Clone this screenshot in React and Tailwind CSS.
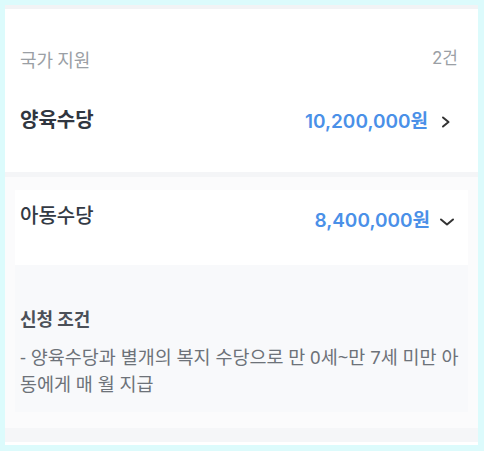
export default function App() {
  const num = { fontFamily: 'Inter, "Noto Sans CJK KR", sans-serif' };
  const kr = { fontFamily: '"Noto Sans CJK KR", "Noto Sans", sans-serif' };
  const desc = { fontFamily: '"Noto Sans", "Noto Sans CJK KR", sans-serif' };
  return (
    <div className="w-[484px] h-[451px] bg-[#dcfbfc] p-[5px] pb-[6px]" style={kr}>
      <div className="w-[473px] h-[440px] bg-white flex flex-col overflow-hidden">
        <div className="h-[4px] bg-[#f2f3f5]" />
        {/* section 1 */}
        <div className="h-[163px] flex flex-col px-[15px]">
          <div className="flex justify-between items-center h-[30px] mt-[35px] text-[18px] text-[#9b9fa5]">
            <span>국가 지원</span>
            <span className="mr-[5px] text-[17px]" style={num}>2건</span>
          </div>
          <div className="flex justify-between items-start mt-[31px]">
            <span className="text-[20px] font-semibold text-[#303640] leading-[28px]">양육수당</span>
            <div className="flex items-center mt-[3px] mr-[12px]">
              <span className="text-[19px] font-semibold text-[#4a90e8] leading-[28px]" style={num}>10,200,000원</span>
              <svg width="10" height="12" viewBox="0 0 10 12" className="ml-[13px]" fill="none" stroke="#333" strokeWidth="2" strokeLinecap="round" strokeLinejoin="round">
                <path d="M2 1.5l5.5 4.5-5.5 4.5" />
              </svg>
            </div>
          </div>
        </div>
        <div className="h-[5px] bg-[#f4f5f7]" />
        {/* section 2 */}
        <div className="flex-1 bg-[#fbfbfc] flex flex-col">
          <div className="px-[10px] pt-[13px]">
            <div className="bg-white h-[75px] flex justify-between items-start px-[5px]">
              <span className="text-[20px] font-medium text-[#333a44] leading-[28px] mt-[11px]">아동수당</span>
              <div className="flex items-center mt-[17px] mr-[8px]">
                <span className="text-[19px] font-semibold text-[#4a90e8] leading-[28px]" style={num}>8,400,000원</span>
                <svg width="16" height="8" viewBox="0 0 16 8" className="ml-[9px] mt-[2px]" fill="none" stroke="#333" strokeWidth="2" strokeLinecap="round" strokeLinejoin="round">
                  <path d="M2 1.5l6 5 6-5" />
                </svg>
              </div>
            </div>
            <div className="bg-[#f8f9fb] h-[147px] px-[5px] pt-[40px]">
              <div className="text-[18px] font-bold text-[#4b5058] leading-[26px]">신청 조건</div>
              <div className="text-[18.5px] text-[#6d7279] leading-[27px] mt-[12px]" style={desc}>
                - 양육수당과 별개의 복지 수당으로 만 0세~만 7세 미만 아동에게 매 월 지급
              </div>
            </div>
          </div>
          <div className="h-[16px]" />
          <div className="h-[14px] bg-[#f5f6f8]" />
          <div className="flex-1 bg-white" />
        </div>
      </div>
    </div>
  );
}
